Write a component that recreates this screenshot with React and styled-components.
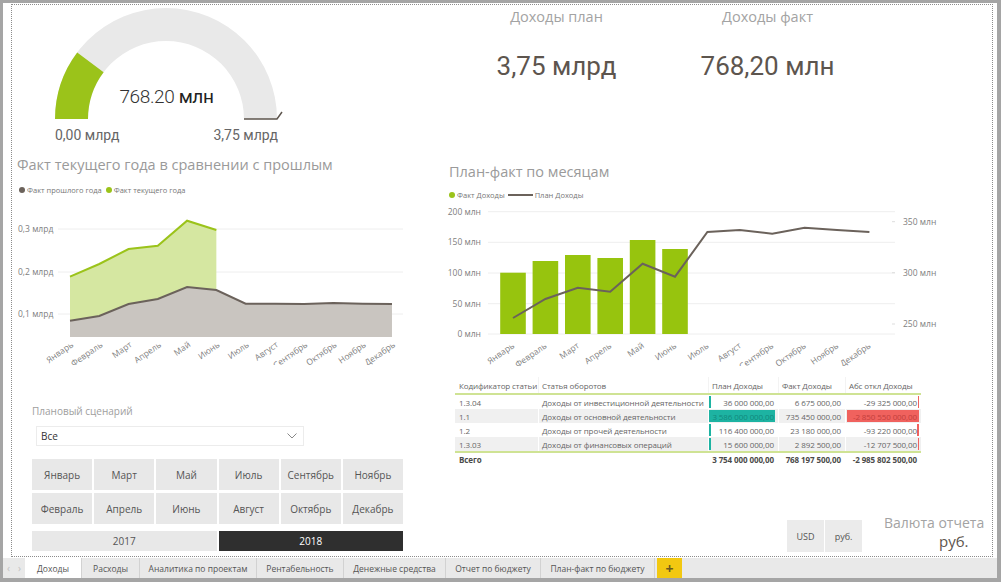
import React from 'react';
import styled, { createGlobalStyle } from 'styled-components';

const GlobalStyle = createGlobalStyle`
  html, body { margin: 0; padding: 0; background: #a5a5a5; }
  body { font-family: 'Open Sans', 'Noto Sans', sans-serif; }
  #root { width: 1001px; height: 582px; }
`;

const months = ['Январь', 'Февраль', 'Март', 'Апрель', 'Май', 'Июнь', 'Июль', 'Август', 'Сентябрь', 'Октябрь', 'Ноябрь', 'Декабрь'];

const GREEN = '#9bc31a';
const DARK = '#6b625b';

// ---------- frame ----------
const Shell = styled.div`
  width: 1001px;
  height: 582px;
  box-sizing: border-box;
  padding: 3px 4px 4px 3px;
  display: flex;
  flex-direction: column;
  background: #a5a5a5;
`;

const Page = styled.div`
  flex: 1;
  min-height: 0;
  display: flex;
  box-sizing: border-box;
  padding: 1px 4px 1px 8px;
  background: #fff;
`;

const Frame = styled.div`
  flex: 1;
  border: 1px dotted #8c8c8c;
  display: grid;
  grid-template-columns: 428px 1fr;
`;

const Column = styled.div`
  display: flex;
  flex-direction: column;
  min-width: 0;
`;

// ---------- gauge ----------
const GaugeSvg = styled.svg`
  display: block;
  text { font-family: Roboto, 'Open Sans', sans-serif; }
`;

function Gauge() {
  const cx = 154, cy = 114, R = 111, r = 78;
  const a = (768.2 / 3750) * Math.PI;
  const ox = cx - R * Math.cos(a), oy = cy - R * Math.sin(a);
  const ix = cx - r * Math.cos(a), iy = cy - r * Math.sin(a);
  return (
    <GaugeSvg width="300" height="140">
      <path d={`M ${cx - R} ${cy} A ${R} ${R} 0 0 1 ${cx + R} ${cy} L ${cx + r} ${cy} A ${r} ${r} 0 0 0 ${cx - r} ${cy} Z`} fill="#e9e9e9" />
      <path d={`M ${cx - R} ${cy} A ${R} ${R} 0 0 1 ${ox} ${oy} L ${ix} ${iy} A ${r} ${r} 0 0 0 ${cx - r} ${cy} Z`} fill={GREEN} />
      <polyline points={`${cx + r},${cy} ${cx + R},${cy} ${cx + R + 5},${cy - 7}`} fill="none" stroke="#5d554e" strokeWidth="1.5" />
      <text x="154.5" y="98" textAnchor="middle" fontSize="19" letterSpacing="-0.4" fill="#333">
        <tspan fontWeight="300">768.20</tspan> <tspan fill="#222">млн</tspan>
      </text>
      <text x="43" y="135" fontSize="14" fill="#666">0,00 млрд</text>
      <text x="266" y="135" fontSize="14" fill="#666" textAnchor="end">3,75 млрд</text>
    </GaugeSvg>
  );
}

// ---------- titles / legends ----------
const ChartTitle = styled.div`
  margin-top: ${(p) => p.$top}px;
  padding-left: ${(p) => p.$left}px;
  font-size: 14.5px;
  line-height: 20px;
  color: #9a9a9a;
  white-space: nowrap;
`;

const Legend = styled.div`
  margin-top: ${(p) => p.$top}px;
  padding-left: ${(p) => p.$left}px;
  display: flex;
  align-items: center;
  height: 12px;
  font-size: 7.5px;
  color: #777;
  white-space: nowrap;
`;

const LegendDot = styled.span`
  width: 6px;
  height: 6px;
  border-radius: 50%;
  background: ${(p) => p.$color};
  margin: 0 2px 0 ${(p) => p.$gap}px;
`;

const LegendLine = styled.span`
  width: 25px;
  height: 2px;
  background: ${DARK};
  margin: 0 2px 0 3px;
`;

const ChartSvg = styled.svg`
  display: block;
  margin-top: ${(p) => p.$top || 0}px;
  text { font-family: 'Open Sans', sans-serif; font-size: 8.5px; fill: #808080; }
`;

// ---------- left area chart ----------
function AreaChart() {
  const xs = months.map((_, i) => 58 + i * 29.27);
  const prev = [120.7, 116, 104, 99, 87, 90, 103.7, 103.7, 104, 103, 103.7, 104];
  const curr = [76.7, 64, 49, 45.7, 20.7, 30];
  const bottom = 137;
  const prevPts = xs.map((x, i) => `${x},${prev[i]}`).join(' ');
  const currPts = curr.map((y, i) => `${xs[i]},${y}`).join(' ');
  return (
    <ChartSvg width="428" height="165" $top={4}>
      {[29, 72, 114].map((y) => (
        <line key={y} x1="46" x2="391" y1={y} y2={y} stroke="#eeeeee" />
      ))}
      <text x="6" y="32">0,3 млрд</text>
      <text x="6" y="75">0,2 млрд</text>
      <text x="6" y="117">0,1 млрд</text>
      <polygon points={`${xs[0]},${bottom} ${currPts} ${xs[5]},${bottom}`} fill="#d5e7a1" />
      <polygon points={`${xs[0]},${bottom} ${prevPts} ${xs[11]},${bottom}`} fill="#c9c5c0" />
      <polyline points={currPts} fill="none" stroke={GREEN} strokeWidth="2" />
      <polyline points={prevPts} fill="none" stroke={DARK} strokeWidth="2" />
      {months.map((m, i) => (
        <text key={m} x={xs[i] + 4} y="146" textAnchor="end" transform={`rotate(-35 ${xs[i] + 4} 146)`}>{m}</text>
      ))}
    </ChartSvg>
  );
}

// ---------- right combo chart ----------
function ComboChart() {
  const xs = months.map((_, i) => 73 + i * 32.4);
  const bars = [71.7, 60, 54, 57, 39, 48];
  const plan = [117, 98, 86.7, 90.7, 62.7, 75.7, 31, 29, 32.7, 26.7, 29, 31];
  const grid = [10.7, 41.3, 72, 102.7, 133];
  const left = ['200 млн', '150 млн', '100 млн', '50 млн', '0 млн'];
  const right = [[20.7, '350 млн'], [71.7, '300 млн'], [123, '250 млн']];
  return (
    <ChartSvg width="552" height="165">
      {grid.map((y, i) => (
        <g key={y}>
          <line x1="48" x2="455" y1={y} y2={y} stroke="#eeeeee" />
          <text x="41" y={y + 3} textAnchor="end">{left[i]}</text>
        </g>
      ))}
      {right.map(([y, t]) => (
        <g key={t}>
          <line x1="452" x2="455" y1={y} y2={y} stroke="#dddddd" />
          <text x="463" y={y + 3}>{t}</text>
        </g>
      ))}
      {bars.map((y, i) => (
        <rect key={i} x={xs[i] - 12.8} y={y} width="25.6" height={133 - y} fill="#97c40e" />
      ))}
      <polyline points={plan.map((y, i) => `${xs[i]},${y}`).join(' ')} fill="none" stroke={DARK} strokeWidth="2" />
      {months.map((m, i) => (
        <text key={m} x={xs[i] + 2} y="146" textAnchor="end" transform={`rotate(-35 ${xs[i] + 2} 146)`}>{m}</text>
      ))}
    </ChartSvg>
  );
}

// ---------- KPI cards ----------
const KpiRow = styled.div`
  display: flex;
  padding-left: 11px;
  margin-top: 2px;
`;

const Kpi = styled.div`
  width: 211px;
  display: flex;
  flex-direction: column;
  align-items: center;
`;

const KpiTitle = styled.div`
  font-size: 14.5px;
  line-height: 20px;
  color: #a3a3a3;
`;

const KpiValue = styled.div`
  margin-top: 23px;
  font-family: Roboto, 'Open Sans', sans-serif;
  font-size: 26px;
  line-height: 32px;
  color: #5d554e;
`;

// ---------- slicers ----------
const SlicerLabel = styled.div`
  margin: 39px 0 0 20px;
  font-size: 10px;
  line-height: 14px;
  color: #9e9e9e;
`;

const Dropdown = styled.div`
  margin: 8px 0 0 24px;
  width: 268px;
  height: 20px;
  box-sizing: border-box;
  border: 1px solid #ececec;
  display: flex;
  align-items: center;
  justify-content: space-between;
  padding: 0 6px 0 4px;
  font-size: 10px;
  color: #333;
`;

const MonthGrid = styled.div`
  margin: 13px 0 0 20px;
  width: 371px;
  display: grid;
  grid-template-columns: repeat(6, 1fr);
  grid-auto-rows: 31px;
  gap: 3px 2px;
`;

const YearGrid = styled.div`
  margin: 7px 0 0 20px;
  width: 371px;
  display: grid;
  grid-template-columns: 1fr 1fr;
  grid-auto-rows: 20px;
  gap: 2px;
`;

const Chip = styled.div`
  display: flex;
  align-items: center;
  justify-content: center;
  background: ${(p) => (p.$on ? '#2f2f2f' : '#e8e8e8')};
  color: ${(p) => (p.$on ? '#fff' : '#555')};
  font-size: 10px;
`;

// ---------- table ----------
const Table = styled.div`
  margin: 11px 0 0 15px;
  width: 466px;
  font-size: 8px;
  letter-spacing: -0.1px;
  color: #666;
`;

const Row = styled.div`
  display: grid;
  grid-template-columns: 83px 170px 70px 67px 76px;
  height: ${(p) => p.$h}px;
  background: ${(p) => (p.$shade ? '#f0f0f0' : '#fff')};
  border-bottom: ${(p) => (p.$line ? '2px solid #cfe394' : 'none')};
  font-weight: ${(p) => (p.$bold ? 700 : 400)};
  color: ${(p) => (p.$bold ? '#4a4a4a' : '#666')};
`;

const Cell = styled.div`
  position: relative;
  display: flex;
  align-items: center;
  justify-content: ${(p) => (p.$right ? 'flex-end' : 'flex-start')};
  padding: ${(p) => (p.$right ? '0 4px 0 0' : '0 0 0 3px')};
  border-left: 1px solid ${(p) => (p.$first ? 'transparent' : p.$head ? '#f3f3f3' : '#fff')};
  white-space: nowrap;
  overflow: hidden;
  color: ${(p) => p.$color || 'inherit'};
`;

const DataBar = styled.span`
  position: absolute;
  top: 1px;
  bottom: 1px;
  ${(p) => (p.$fromRight ? 'right: 2px;' : 'left: 0;')}
  background: ${(p) => p.$color};
`;

const CellText = styled.span`
  position: relative;
`;

const rows = [
  ['1.3.04', 'Доходы от инвестиционной деятельности', 36000000, '36 000 000,00', '6 675 000,00', 29325000, '-29 325 000,00'],
  ['1.1', 'Доходы от основной деятельности', 3586000000, '3 586 000 000,00', '735 450 000,00', 2850550000, '-2 850 550 000,00'],
  ['1.2', 'Доходы от прочей деятельности', 116400000, '116 400 000,00', '23 180 000,00', 93220000, '-93 220 000,00'],
  ['1.3.03', 'Доходы от финансовых операций', 15600000, '15 600 000,00', '2 892 500,00', 12707500, '-12 707 500,00'],
];

function DataTable() {
  return (
    <Table>
      <Row $h={16} $line>
        <Cell $head $first>Кодификатор статьи</Cell>
        <Cell $head>Статья оборотов</Cell>
        <Cell $head>План Доходы</Cell>
        <Cell $head>Факт Доходы</Cell>
        <Cell $head>Абс откл Доходы</Cell>
      </Row>
      {rows.map((r, i) => {
        const planW = Math.max(1.5, (r[2] / 3586000000) * 66);
        const absW = Math.max(1.5, (r[5] / 2850550000) * 72);
        const big = i === 1;
        return (
          <Row key={r[0]} $h={14} $shade={i % 2 === 1} $line={i === rows.length - 1}>
            <Cell $first>{r[0]}</Cell>
            <Cell>{r[1]}</Cell>
            <Cell $right $color={big ? '#12897d' : undefined}>
              <DataBar $color="#1db3a2" style={{ width: planW }} />
              <CellText>{r[3]}</CellText>
            </Cell>
            <Cell $right>{r[4]}</Cell>
            <Cell $right $color={big ? '#c3403d' : undefined}>
              <DataBar $fromRight $color="#f0625e" style={{ width: absW }} />
              <CellText>{r[6]}</CellText>
            </Cell>
          </Row>
        );
      })}
      <Row $h={13} $bold>
        <Cell $first>Всего</Cell>
        <Cell />
        <Cell $right>3 754 000 000,00</Cell>
        <Cell $right>768 197 500,00</Cell>
        <Cell $right>-2 985 802 500,00</Cell>
      </Row>
    </Table>
  );
}

// ---------- currency ----------
const CurrencyRow = styled.div`
  margin-top: auto;
  padding: 0 8px 4px 0;
  display: flex;
  justify-content: flex-end;
  align-items: flex-end;
`;

const CurrencyBtn = styled.div`
  width: 37px;
  height: 32px;
  margin-left: 1px;
  background: #ebebeb;
  display: flex;
  align-items: center;
  justify-content: center;
  font-size: 9px;
  color: #555;
`;

const CurrencyInfo = styled.div`
  margin: 0 0 2px 22px;
  width: 100px;
  display: flex;
  flex-direction: column;
`;

const CurrencyCaption = styled.div`
  font-size: 14px;
  line-height: 18px;
  color: #a3a3a3;
  white-space: nowrap;
`;

const CurrencyValue = styled.div`
  padding-left: 55px;
  font-size: 15px;
  line-height: 18px;
  color: #5d554e;
`;

// ---------- tabs ----------
const TabBar = styled.div`
  height: 20px;
  display: flex;
  background: #e9e9e9;
  font-size: 8.5px;
  color: #555;
`;

const Arrows = styled.div`
  width: 22px;
  display: flex;
  align-items: center;
  justify-content: space-around;
  color: #c2c2c2;
  font-size: 10px;
`;

const Tab = styled.div`
  width: ${(p) => p.$w}px;
  display: flex;
  align-items: center;
  justify-content: center;
  box-sizing: border-box;
  border-right: 1px solid #d2d2d2;
  background: ${(p) => (p.$active ? '#fff' : 'transparent')};
  white-space: nowrap;
`;

const AddTab = styled.div`
  width: 25px;
  margin-left: 2px;
  background: #f2c811;
  color: #6b5a1e;
  font-size: 14px;
  font-weight: 700;
  display: flex;
  align-items: center;
  justify-content: center;
`;

const tabs = [
  ['Доходы', 57], ['Расходы', 58], ['Аналитика по проектам', 117], ['Рентабельность', 87],
  ['Денежные средства', 102], ['Отчет по бюджету', 95], ['План-факт по бюджету', 114],
];

export default function App() {
  return (
    <Shell>
      <GlobalStyle />
      <Page>
        <Frame>
          <Column>
            <Gauge />
            <ChartTitle $top={10} $left={5}>Факт текущего года в сравнении с прошлым</ChartTitle>
            <Legend $top={9} $left={7}>
              <LegendDot $color={DARK} $gap={0} />Факт прошлого года
              <LegendDot $color={GREEN} $gap={4} />Факт текущего года
            </Legend>
            <AreaChart />
            <SlicerLabel>Плановый сценарий</SlicerLabel>
            <Dropdown>
              Все
              <svg width="10" height="6" viewBox="0 0 10 6">
                <polyline points="0.5,0.5 5,5 9.5,0.5" fill="none" stroke="#888" strokeWidth="1" />
              </svg>
            </Dropdown>
            <MonthGrid>
              {['Январь', 'Март', 'Май', 'Июль', 'Сентябрь', 'Ноябрь', 'Февраль', 'Апрель', 'Июнь', 'Август', 'Октябрь', 'Декабрь'].map((m) => (
                <Chip key={m}>{m}</Chip>
              ))}
            </MonthGrid>
            <YearGrid>
              <Chip>2017</Chip>
              <Chip $on>2018</Chip>
            </YearGrid>
          </Column>
          <Column>
            <KpiRow>
              <Kpi>
                <KpiTitle>Доходы план</KpiTitle>
                <KpiValue>3,75 млрд</KpiValue>
              </Kpi>
              <Kpi>
                <KpiTitle>Доходы факт</KpiTitle>
                <KpiValue>768,20 млн</KpiValue>
              </Kpi>
            </KpiRow>
            <ChartTitle $top={80} $left={9}>План-факт по месяцам</ChartTitle>
            <Legend $top={7} $left={9}>
              <LegendDot $color={GREEN} $gap={0} />Факт Доходы
              <LegendLine />План Доходы
            </Legend>
            <ComboChart />
            <DataTable />
            <CurrencyRow>
              <CurrencyBtn>USD</CurrencyBtn>
              <CurrencyBtn>руб.</CurrencyBtn>
              <CurrencyInfo>
                <CurrencyCaption>Валюта отчета</CurrencyCaption>
                <CurrencyValue>руб.</CurrencyValue>
              </CurrencyInfo>
            </CurrencyRow>
          </Column>
        </Frame>
      </Page>
      <TabBar>
        <Arrows><span>‹</span><span>›</span></Arrows>
        {tabs.map(([t, w], i) => (
          <Tab key={t} $w={w} $active={i === 0}>{t}</Tab>
        ))}
        <AddTab>+</AddTab>
      </TabBar>
    </Shell>
  );
}
